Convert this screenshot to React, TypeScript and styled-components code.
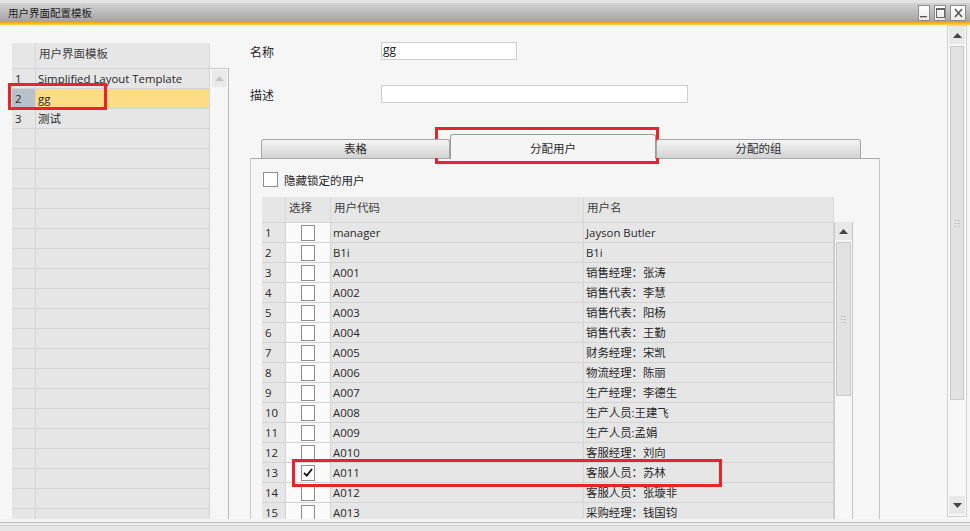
import React from "react";
import styled, { createGlobalStyle } from "styled-components";

const Global = createGlobalStyle`
  html, body { margin: 0; padding: 0; background: #f6f6f6; }
  body { font-family: "Open Sans", "Noto Sans CJK SC", sans-serif; }
`;

const FONT = `"Open Sans", "Noto Sans CJK SC", sans-serif`;

const Window = styled.div`
  position: relative;
  width: 970px;
  height: 531px;
  overflow: hidden;
  display: flex;
  flex-direction: column;
  background: #f6f6f6;
  font-family: ${FONT};
  font-size: 11.4px;
  color: #222;
`;

const TitleBar = styled.div`
  height: 19px;
  flex: none;
  border-top: 3px solid #e3e3e3;
  background: linear-gradient(#d2d2d2, #a3a3a3);
  display: flex;
  align-items: center;
  padding: 0 4px 0 8px;
`;

const TitleText = styled.div`
  flex: 1;
  font-size: 10.5px;
  color: #1c1c1c;
  font-family: "Noto Sans CJK SC", sans-serif;
`;

const WinButtons = styled.div`
  display: flex;
  gap: 4px;
`;

const WinButton = styled.div<{ $w?: number }>`
  width: ${(p) => p.$w ?? 12}px;
  height: 16px;
  box-sizing: border-box;
  background: linear-gradient(#ffffff, #e9e9e9);
  border: 1px solid #8d8d8d;
  display: flex;
  align-items: center;
  justify-content: center;
`;

const Accent = styled.div`
  height: 3px;
  flex: none;
  background: linear-gradient(#f0a400, #ffd45a);
`;

const Body = styled.div`
  flex: 1;
  min-height: 0;
  display: flex;
  overflow: hidden;
`;

const BottomStrip = styled.div`
  height: 12px;
  flex: none;
  background: linear-gradient(
    #f3f3f3 0px,
    #f3f3f3 3px,
    #bcbcbc 3px,
    #bcbcbc 4px,
    #ededed 4px,
    #ededed 6px,
    #cdcdcd 6px,
    #cdcdcd 7px,
    #e6e6e6 7px
  );
`;

/* ---------- left list ---------- */

const LeftPanel = styled.div`
  width: 230px;
  flex: none;
  box-sizing: border-box;
  padding: 18px 0 0 12px;
  display: flex;
  overflow: hidden;
`;

const ListGrid = styled.div`
  width: 198px;
  flex: none;
  display: flex;
  flex-direction: column;
`;

const HeaderRow = styled.div`
  display: flex;
  height: 25px;
  flex: none;
`;

const HeaderCell = styled.div<{ $w: number }>`
  width: ${(p) => p.$w}px;
  flex: none;
  box-sizing: border-box;
  background: #e6e6e6;
  border-right: 1px solid #d8d8d8;
  padding: 2px 0 0 3px;
  font-size: 11.5px;
  color: #404040;
  font-family: "Noto Sans CJK SC", sans-serif;
`;

const Row = styled.div`
  display: flex;
  height: 20px;
  flex: none;
  box-sizing: border-box;
  border-top: 1px solid #d4d4d4;
`;

const Cell = styled.div<{ $w: number; $bg?: string; $pad?: number; $center?: boolean }>`
  width: ${(p) => p.$w}px;
  flex: none;
  box-sizing: border-box;
  background: ${(p) => p.$bg ?? "#e6e6e6"};
  border-right: 1px solid #d4d4d4;
  padding-left: ${(p) => p.$pad ?? 2}px;
  line-height: 19px;
  font-size: 11.4px;
  color: #262626;
  white-space: nowrap;
  overflow: hidden;
  display: ${(p) => (p.$center ? "flex" : "block")};
  align-items: center;
  justify-content: center;
`;

const ListScroll = styled.div`
  width: 19px;
  flex: none;
  margin-top: 25px;
  box-sizing: border-box;
  border-top: 1px solid #c9c9c9;
  border-right: 1px solid #bdbdbd;
  padding: 1px 0 0 2px;
`;

const FaintArrowBox = styled.div`
  width: 15px;
  height: 17px;
  background: #e9e9e9;
  display: flex;
  align-items: center;
  justify-content: center;
`;

/* ---------- main ---------- */

const Main = styled.div`
  flex: 1;
  min-width: 0;
  box-sizing: border-box;
  padding-left: 20px;
  display: flex;
  flex-direction: column;
  overflow: hidden;
`;

const FormRow = styled.div<{ $mt: number }>`
  display: flex;
  align-items: center;
  height: 18px;
  margin-top: ${(p) => p.$mt}px;
  flex: none;
`;

const FormLabel = styled.div`
  width: 131px;
  font-size: 12px;
  color: #262626;
  font-family: "Noto Sans CJK SC", sans-serif;
`;

const TextBox = styled.div<{ $w: number }>`
  width: ${(p) => p.$w}px;
  height: 18px;
  box-sizing: border-box;
  background: #fff;
  border: 1px solid #cdcdcd;
  padding-left: 1px;
  font-size: 12px;
  line-height: 14px;
  color: #222;
`;

const TabStrip = styled.div`
  display: flex;
  align-items: flex-end;
  height: 24px;
  margin-top: 31px;
  padding-left: 11px;
  flex: none;
  position: relative;
  z-index: 1;
`;

const Tab = styled.div<{ $w: number; $active?: boolean }>`
  width: ${(p) => p.$w}px;
  height: ${(p) => (p.$active ? 25 : 19)}px;
  margin-bottom: ${(p) => (p.$active ? -1 : 0)}px;
  box-sizing: border-box;
  border: 1px solid ${(p) => (p.$active ? "#9a9a9a" : "#a6a6a6")};
  border-bottom: none;
  border-radius: 3px 3px 0 0;
  background: ${(p) => (p.$active ? "#f5f5f5" : "linear-gradient(#f5f5f5, #d2d2d2)")};
  text-align: center;
  padding-top: ${(p) => (p.$active ? 5 : 0)}px;
  line-height: 17px;
  font-size: 11.5px;
  color: #2a2a2a;
  font-family: "Noto Sans CJK SC", sans-serif;
`;

const TabPanel = styled.div`
  width: 630px;
  flex: 1;
  box-sizing: border-box;
  border-top: 1px solid #ababab;
  border-left: 1px solid #cacaca;
  border-right: 1px solid #c4c4c4;
  padding: 13px 0 0 11px;
  display: flex;
  flex-direction: column;
`;

const HideRow = styled.div`
  display: flex;
  align-items: center;
  gap: 6px;
  height: 15px;
  padding-left: 1px;
  font-size: 11.5px;
  font-family: "Noto Sans CJK SC", sans-serif;
  color: #262626;
`;

const CheckBox = styled.div<{ $w?: number; $h?: number }>`
  width: ${(p) => p.$w ?? 15}px;
  height: ${(p) => p.$h ?? 15}px;
  box-sizing: border-box;
  background: #fff;
  border: 1px solid #8e8e8e;
  display: flex;
  align-items: center;
  justify-content: center;
`;

const Grid = styled.div`
  margin-top: 10px;
  width: 590px;
  display: flex;
  flex-direction: column;
`;

const GridBody = styled.div`
  display: flex;
`;

const GridRows = styled.div`
  width: 572px;
  flex: none;
  display: flex;
  flex-direction: column;
`;

const VScroll = styled.div`
  width: 19px;
  flex: none;
  box-sizing: border-box;
  border-left: 1px solid #c9c9c9;
  border-right: 1px solid #c4c4c4;
  background: #f7f7f7;
  display: flex;
  flex-direction: column;
`;

const ArrowBox = styled.div`
  height: 18px;
  flex: none;
  background: #e8e8e8;
  border-bottom: 1px solid #f7f7f7;
  display: flex;
  align-items: center;
  justify-content: center;
`;

const Thumb = styled.div<{ $h: number }>`
  height: ${(p) => p.$h}px;
  flex: none;
  margin: 1px 1px 0 1px;
  box-sizing: border-box;
  background: #e2e2e2;
  border: 1px solid #c9c9c9;
  display: flex;
  align-items: center;
  justify-content: center;
`;

const Spacer = styled.div`
  flex: 1;
`;

const WinScrollCol = styled.div`
  width: 20px;
  flex: none;
  margin-right: 3px;
  display: flex;
  flex-direction: column;
  padding-bottom: 2px;
  box-sizing: border-box;
`;

const WinScrollBox = styled.div`
  flex: 1;
  box-sizing: border-box;
  border: 1px solid #d2d2d2;
  background: #f8f8f8;
  display: flex;
  flex-direction: column;
  padding: 0 1px 1px 1px;
`;

const Highlight = styled.div<{ $x: number; $y: number; $w: number; $h: number }>`
  position: absolute;
  left: ${(p) => p.$x}px;
  top: ${(p) => p.$y}px;
  width: ${(p) => p.$w}px;
  height: ${(p) => p.$h}px;
  box-sizing: border-box;
  border: 3px solid #e8232b;
  pointer-events: none;
`;

/* ---------- icons ---------- */

const UpArrow = ({ color = "#444" }: { color?: string }) => (
  <svg width="9" height="5" viewBox="0 0 9 5">
    <polygon points="0,5 4.5,0 9,5" fill={color} />
  </svg>
);

const DownArrow = ({ color = "#444" }: { color?: string }) => (
  <svg width="9" height="5" viewBox="0 0 9 5">
    <polygon points="0,0 4.5,5 9,0" fill={color} />
  </svg>
);

const Grip = () => (
  <svg width="5" height="7" viewBox="0 0 5 7">
    {[0, 3, 6].map((y) =>
      [0, 3].map((x) => <rect key={`${x}-${y}`} x={x} y={y} width="1.5" height="1" fill="#b4b4b4" />)
    )}
  </svg>
);

const Tick = () => (
  <svg width="10" height="9" viewBox="0 0 10 9">
    <path d="M1 4.8 L3.8 7.6 L9 1" fill="none" stroke="#111" strokeWidth="1.8" />
  </svg>
);

const MinGlyph = () => (
  <svg width="8" height="10" viewBox="0 0 8 10">
    <rect x="0" y="8" width="7" height="1.3" fill="#555" />
  </svg>
);
const MaxGlyph = () => (
  <svg width="9" height="10" viewBox="0 0 9 10">
    <rect x="0.5" y="0.5" width="8" height="9" fill="none" stroke="#666" strokeWidth="1" />
    <rect x="0.5" y="0.5" width="8" height="1.5" fill="#666" />
  </svg>
);
const CloseGlyph = () => (
  <svg width="9" height="10" viewBox="0 0 9 10">
    <path d="M1 1 L8 9 M8 1 L1 9" stroke="#555" strokeWidth="1.5" />
  </svg>
);

/* ---------- data ---------- */

const templates = ["Simplified Layout Template", "gg", "测试"];

const users: { code: string; name: string; checked?: boolean }[] = [
  { code: "manager", name: "Jayson Butler" },
  { code: "B1i", name: "B1i" },
  { code: "A001", name: "销售经理：张涛" },
  { code: "A002", name: "销售代表：李慧" },
  { code: "A003", name: "销售代表：阳杨" },
  { code: "A004", name: "销售代表：王勤" },
  { code: "A005", name: "财务经理：宋凯" },
  { code: "A006", name: "物流经理：陈丽" },
  { code: "A007", name: "生产经理：李德生" },
  { code: "A008", name: "生产人员:王建飞" },
  { code: "A009", name: "生产人员:孟娟" },
  { code: "A010", name: "客服经理：刘向" },
  { code: "A011", name: "客服人员：苏林", checked: true },
  { code: "A012", name: "客服人员：张璇非" },
  { code: "A013", name: "采购经理：钱国钧" },
];

const COLS = { num: 24, sel: 45, code: 253, name: 250 };

export default function App() {
  const listRows = Array.from({ length: 24 }, (_, i) => i);
  return (
    <Window>
      <Global />
      <TitleBar>
        <TitleText>用户界面配置模板</TitleText>
        <WinButtons>
          <WinButton>
            <MinGlyph />
          </WinButton>
          <WinButton>
            <MaxGlyph />
          </WinButton>
          <WinButton $w={16}>
            <CloseGlyph />
          </WinButton>
        </WinButtons>
      </TitleBar>
      <Accent />
      <Body>
        <LeftPanel>
          <ListGrid>
            <HeaderRow>
              <HeaderCell $w={24} />
              <HeaderCell $w={174}>用户界面模板</HeaderCell>
            </HeaderRow>
            {listRows.map((i) => {
              const selected = i === 1;
              return (
                <Row key={i}>
                  <Cell $w={24} $pad={3} $bg={selected ? "#b8c0c8" : undefined}>
                    {i < templates.length ? i + 1 : ""}
                  </Cell>
                  <Cell $w={174} $bg={selected ? "#fddc86" : undefined}>
                    {templates[i] ?? ""}
                  </Cell>
                </Row>
              );
            })}
          </ListGrid>
          <ListScroll>
            <FaintArrowBox>
              <UpArrow color="#c4c4c4" />
            </FaintArrowBox>
          </ListScroll>
        </LeftPanel>

        <Main>
          <FormRow $mt={17}>
            <FormLabel>名称</FormLabel>
            <TextBox $w={136}>gg</TextBox>
          </FormRow>
          <FormRow $mt={25}>
            <FormLabel>描述</FormLabel>
            <TextBox $w={307} />
          </FormRow>

          <TabStrip>
            <Tab $w={189}>表格</Tab>
            <Tab $w={206} $active>
              分配用户
            </Tab>
            <Tab $w={205}>分配的组</Tab>
          </TabStrip>
          <TabPanel>
            <HideRow>
              <CheckBox />
              隐藏锁定的用户
            </HideRow>
            <Grid>
              <HeaderRow>
                <HeaderCell $w={COLS.num} />
                <HeaderCell $w={COLS.sel}>选择</HeaderCell>
                <HeaderCell $w={COLS.code}>用户代码</HeaderCell>
                <HeaderCell $w={COLS.name}>用户名</HeaderCell>
              </HeaderRow>
              <GridBody>
                <GridRows>
                  {users.map((u, i) => (
                    <Row key={u.code}>
                      <Cell $w={COLS.num} $pad={3}>
                        {i + 1}
                      </Cell>
                      <Cell $w={COLS.sel} $bg="#fafafa" $pad={0} $center>
                        <CheckBox $w={14} $h={16}>
                          {u.checked ? <Tick /> : null}
                        </CheckBox>
                      </Cell>
                      <Cell $w={COLS.code}>{u.code}</Cell>
                      <Cell $w={COLS.name}>{u.name}</Cell>
                    </Row>
                  ))}
                </GridRows>
                <VScroll>
                  <ArrowBox>
                    <UpArrow />
                  </ArrowBox>
                  <Thumb $h={154}>
                    <Grip />
                  </Thumb>
                  <Spacer />
                </VScroll>
              </GridBody>
            </Grid>
          </TabPanel>
        </Main>

        <WinScrollCol>
          <WinScrollBox>
            <ArrowBox>
              <UpArrow />
            </ArrowBox>
            <Thumb $h={354}>
              <Grip />
            </Thumb>
            <Spacer />
            <ArrowBox>
              <DownArrow />
            </ArrowBox>
          </WinScrollBox>
        </WinScrollCol>
      </Body>
      <BottomStrip />

      <Highlight $x={8} $y={83} $w={99} $h={27} />
      <Highlight $x={435} $y={127} $w={224} $h={37} />
      <Highlight $x={292} $y={459} $w={430} $h={28} />
    </Window>
  );
}
